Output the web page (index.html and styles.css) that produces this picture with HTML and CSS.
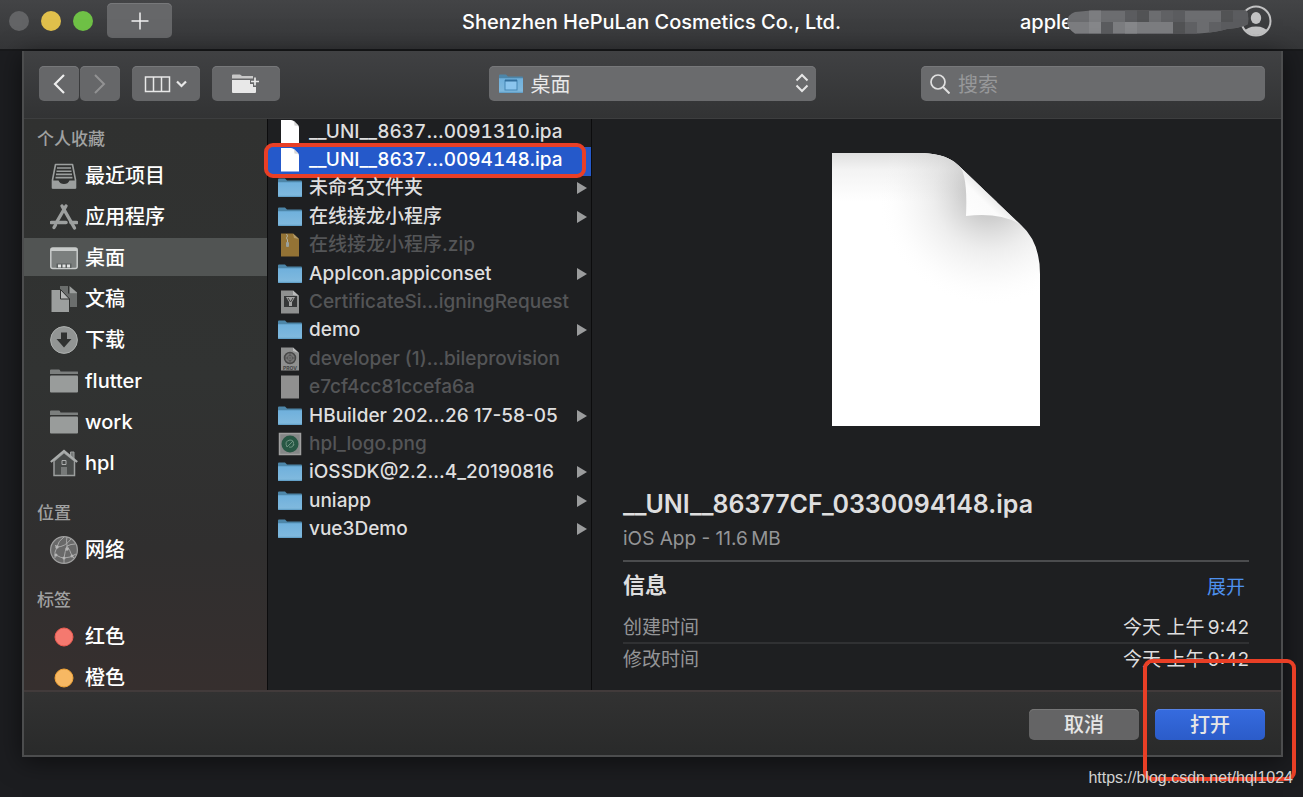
FILE: index.html
```html
<!DOCTYPE html>
<html lang="zh-CN">
<head>
<meta charset="utf-8">
<title>Shenzhen HePuLan Cosmetics Co., Ltd.</title>
<link rel="stylesheet" href="styles.css">
</head>
<body>
<svg class="defs" aria-hidden="true">
  <defs>
    <linearGradient id="blue" x1="0" y1="0" x2="0" y2="1"><stop offset="0" stop-color="#6fb0dc"/><stop offset="1" stop-color="#82bade"/></linearGradient>
    <symbol id="folder" viewBox="0 0 24 20"><path d="M0 1.500Q0 .5 1 .5H7L9 2.500H23Q24 2.500 24 3.500V5H0Z" fill="#4d86a9"/><path d="M0 4.200H24V18Q24 19 23 19H1Q0 19 0 18Z" fill="url(#blue)"/><path d="M0 18.300H24" stroke="#5d9cc3"/></symbol>
    <symbol id="doc" viewBox="0 0 24 24"><path d="M3 0H13Q15 0 16.500 1.500L20 5Q21 6 21 8V23.500H3Z" fill="#fff"/><path d="M15.500 1Q16.500 2 16.500 5.500Q19.500 5.500 20.500 6Z" fill="#d4d4d4"/></symbol>
    <symbol id="side-folder" viewBox="0 0 28 28"><path d="M0 3.500Q0 2.500 1 2.500H9Q10 2.500 10.500 4.500H27.500Q28.500 4.500 28 7H0Z" fill="#7c7f7e"/><rect y="8.500" width="28" height="17" rx="1" fill="#999c9b"/></symbol>
    <symbol id="arrow" viewBox="0 0 10 12"><path d="M0 0L10 6L0 12Z" fill="#9b9c9d"/></symbol>
  </defs>
</svg>

<header class="titlebar">
  <div class="window-controls">
    <span class="light"></span>
    <span class="light light-yellow"></span>
    <span class="light light-green"></span>
    <button class="button add" aria-label="添加"><svg width="18" height="18" viewBox="0 0 18 18"><path d="M9 .5V17.500M.5 9H17.500" stroke="#f2f2f2" stroke-width="1.500"/></svg></button>
  </div>
  <h1 class="window-title">Shenzhen HePuLan Cosmetics Co., Ltd.</h1>
  <div class="account">
    <span class="account-name">apple</span>
    <svg class="avatar" viewBox="0 0 32 32"><defs><clipPath id="face"><circle cx="16" cy="16" r="14"/></clipPath></defs><circle cx="16" cy="16" r="14.500" fill="none" stroke="#c2c2c3" stroke-width="2"/><g clip-path="url(#face)" fill="#c2c2c3"><ellipse cx="16" cy="13" rx="5.200" ry="6"/><path d="M4 27Q7 21.500 16 21.500T28 27V32H4Z"/></g></svg>
    <svg class="redaction" viewBox="0 0 182 25"><defs><clipPath id="smear"><path d="M0 12Q1 4 8 2L24 .5H179Q182 3 181 14L177 16Q168 19 160 19Q150 22 132 23.500H8Q2 20 0 12Z"/></clipPath></defs>
      <g clip-path="url(#smear)">
        <path fill="#6c6d70" d="M0 0H182V25H0Z"/>
        <path fill="#7c7d80" d="M22 0H34V12H22ZM0 12H22V25H0ZM46 12H106V25H46Z"/>
        <path fill="#86878a" d="M22 12H34V25H22ZM58 12H70V25H58Z"/>
        <path fill="#5b5c5f" d="M34 12H46V25H34ZM58 0H70V12H58ZM106 0H118V12H106ZM154 0H182V25H154Z"/>
        <path fill="#525355" d="M70 0H82V12H70ZM106 12H118V25H106ZM154 0H166V12H154Z"/>
        <path fill="#606164" d="M94 0H106V12H94ZM118 12H130V25H118ZM142 12H154V25H142Z"/>
      </g></svg>
  </div>
</header>

<main class="dialog">
  <div class="toolbar">
    <div class="tools">
      <div class="history">
        <button class="button nav-button" aria-label="后退"><svg width="12" height="20" viewBox="0 0 12 20"><path d="M11 1L2 10L11 19" fill="none" stroke="#eee" stroke-width="2.200"/></svg></button>
        <button class="button nav-button" aria-label="前进" disabled><svg width="12" height="20" viewBox="0 0 12 20"><path d="M1 1L10 10L1 19" fill="none" stroke="#929293" stroke-width="2"/></svg></button>
      </div>
      <button class="button tool-button" aria-label="分栏显示"><svg width="44" height="18" viewBox="0 0 44 18"><path d="M1.500 2H25.500V16.500H1.500ZM9.500 2V16.500M17.500 2V16.500" fill="none" stroke="#e8e8e8" stroke-width="1.500"/><path d="M33 6.500L37.500 11L42 6.500" fill="none" stroke="#e8e8e8" stroke-width="2.200"/></svg></button>
      <button class="button tool-button" aria-label="新建文件夹"><svg width="28" height="20" viewBox="0 0 28 20"><path d="M0 1.500Q0 .5 1 .5H8L10 2H21V4.500H0Z" fill="#c8c8c8"/><path d="M0 6H18V10H21V13H24V18Q24 19 23 19H1Q0 19 0 18Z" fill="#e8e8e8"/><path d="M23 3.500V11.500M19 7.500H27" stroke="#e8e8e8" stroke-width="1.700"/></svg></button>
    </div>
    <label class="location">
      <svg class="location-icon" viewBox="0 0 24 20"><use href="#folder"/><rect x="6" y="6.500" width="12" height="9.500" fill="#8bc5ee" stroke="#4586b4"/><path d="M6 6.500H18" stroke="#326f9d" stroke-width="2"/></svg>
      <select class="location-select" aria-label="位置"><option>桌面</option></select>
      <svg class="location-steps" viewBox="0 0 14 20"><path d="M1.500 7.500L7 2L12.500 7.500M1.500 12.500L7 18L12.500 12.500" fill="none" stroke="#e6e6e6" stroke-width="2"/></svg>
    </label>
    <label class="search">
      <svg class="search-icon" viewBox="0 0 20 20"><circle cx="8" cy="8" r="7" fill="none" stroke="#e0e0e0" stroke-width="1.700"/><path d="M13 13L19.500 19.500" stroke="#e0e0e0" stroke-width="2"/></svg>
      <input class="search-input" type="search" placeholder="搜索" aria-label="搜索">
    </label>
  </div>

  <div class="browser">
    <nav class="sidebar">
      <section class="group">
        <h2 class="group-title">个人收藏</h2>
        <a class="place" href="#"><svg class="place-icon" viewBox="0 0 28 28"><path d="M5.500 2.500H22.500L25.500 18V26H2.500V18Z" fill="none" stroke="#9c9f9e" stroke-width="1.600" stroke-linejoin="round"/><path d="M7 6H21M6.500 9.200H21.500M6 12.400H22M5.500 15.600H22.500" stroke="#9c9f9e" stroke-width="1.600"/><path d="M2 18.500H8.500Q10 22 14 22T19.500 18.500H26V25Q26 26.500 24.500 26.500H3.500Q2 26.500 2 25Z" fill="#9c9f9e"/></svg>最近项目</a>
        <a class="place" href="#"><svg class="place-icon" viewBox="0 0 28 28"><path d="M1.500 19.500H16M21 19.500H26.500" stroke="#9c9f9e" stroke-width="3.600" stroke-linecap="round"/><path d="M12 3L24.500 25M16 3L7 18.500M5.500 22L4 24.500" stroke="#9c9f9e" stroke-width="3.400" stroke-linecap="round"/></svg>应用程序</a>
        <a class="place place-current" href="#" aria-current="page"><svg class="place-icon" viewBox="0 0 28 28"><rect x=".8" y="4" width="26.400" height="20.500" rx="2" fill="#7b7f7e" stroke="#c8cbca" stroke-width="1.500"/><path d="M1 5.500H27" stroke="#c8cbca" stroke-width="3"/><path d="M6.500 19.500H21.500V24H6.500Z" fill="#5c6160"/><path d="M8 20.500H11V23.500H8ZM12.500 20.500H15.500V23.500H12.500ZM17 20.500H20V23.500H17Z" fill="#e2e4e3"/></svg>桌面</a>
        <a class="place" href="#"><svg class="place-icon" viewBox="0 0 28 28"><path d="M10 1H18V8.500H27V22H10Z" fill="#6b6e6d"/><path d="M19.500 1L27 7.500V8.500H19.500Z" fill="#9c9f9e"/><path d="M1 4.500H10.500L19.500 14V27.500H1Z" fill="#9c9f9e" stroke="#303231"/><path d="M10.500 4.500L19.500 14H10.500Z" fill="#b7b9b8" stroke="#303231"/></svg>文稿</a>
        <a class="place" href="#"><svg class="place-icon" viewBox="0 0 28 28"><circle cx="14" cy="14" r="13.400" fill="#929594" stroke="#adb0af"/><path d="M11 6.500H17V13H21.500L14 21.500L6.500 13H11Z" fill="#303231"/></svg>下载</a>
        <a class="place" href="#"><svg class="place-icon"><use href="#side-folder"/></svg>flutter</a>
        <a class="place" href="#"><svg class="place-icon"><use href="#side-folder"/></svg>work</a>
        <a class="place" href="#"><svg class="place-icon" viewBox="0 0 28 28"><path d="M4 12V26.500H24.500V12L14 3.500Z" fill="#484b4a" stroke="#9c9f9e" stroke-width="1.500"/><path d="M20.500 8V3H24V11" fill="#777a79" stroke="#9c9f9e"/><path d="M.8 13L14 2L27.200 13" fill="none" stroke="#aaadac" stroke-width="2.200"/><path d="M12 11.500H16V15.500H12Z" fill="none" stroke="#aaadac"/><path d="M11 18H17V26H11Z" fill="#777a79"/></svg>hpl</a>
      </section>
      <section class="group">
        <h2 class="group-title">位置</h2>
        <a class="place" href="#"><svg class="place-icon" viewBox="0 0 28 28"><circle cx="14" cy="14" r="13.400" fill="#696969" stroke="#a0a0a0" stroke-width="1.200"/><path d="M7 11Q15 11 21 3M7 11Q4 16 5 22M7 11Q8 5 14 1M5 9L7 11M6 19Q11 22 14 22Q20 22 26 18M17 10Q16 4 17 1M17 10Q15 15 14 22V27M17 10Q20 14 22 20L24 22M17 10Q21 8 25 8" fill="none" stroke="#a9a9a9"/><g fill="#b5b5b5"><circle cx="7" cy="11" r="1.700"/><circle cx="17" cy="13" r="1.700"/><circle cx="14" cy="22" r="1.500"/><circle cx="22" cy="20" r="1.500"/><circle cx="6" cy="19" r="1.500"/></g></svg>网络</a>
      </section>
      <section class="group">
        <h2 class="group-title">标签</h2>
        <a class="place" href="#"><svg class="place-icon" viewBox="0 0 28 28"><circle cx="14" cy="14" r="9" fill="#f4796f" stroke="#ee5c52"/></svg>红色</a>
        <a class="place" href="#"><svg class="place-icon" viewBox="0 0 28 28"><circle cx="14" cy="14" r="9" fill="#f7b863" stroke="#f1a336"/></svg>橙色</a>
      </section>
    </nav>

    <div class="files-column">
      <div class="files">
        <button class="file file-build"><svg class="file-icon"><use href="#doc"/></svg><span class="file-name">__UNI__8637…0091310.ipa</span></button>
        <button class="file file-build file-selected"><svg class="file-icon"><use href="#doc"/></svg><span class="file-name">__UNI__8637…0094148.ipa</span></button>
        <button class="file"><svg class="file-icon"><use href="#folder"/></svg><span class="file-name">未命名文件夹</span><svg class="file-arrow"><use href="#arrow"/></svg></button>
        <button class="file"><svg class="file-icon"><use href="#folder"/></svg><span class="file-name">在线接龙小程序</span><svg class="file-arrow"><use href="#arrow"/></svg></button>
        <button class="file" disabled><svg class="file-icon" viewBox="0 0 24 24"><path d="M3 .5H15L21 6V23.500H3Z" fill="#947335"/><path d="M15 .5L16 5L21 6Z" fill="#b39a68"/><path d="M8.500 1L9.500 3L8.500 5L9.500 7V9" stroke="#b5b3a8" fill="none"/><rect x="8" y="9" width="3" height="5" rx="1" fill="#9aa09b"/></svg><span class="file-name">在线接龙小程序.zip</span></button>
        <button class="file"><svg class="file-icon"><use href="#folder"/></svg><span class="file-name">AppIcon.appiconset</span><svg class="file-arrow"><use href="#arrow"/></svg></button>
        <button class="file" disabled><svg class="file-icon" viewBox="0 0 24 24"><path d="M3 .5H15L21 6V23.500H3Z" fill="#8f9090"/><path d="M15 .5V5L21 6Z" fill="#bbb"/><path d="M6 6H19V17H6Z" fill="#363738"/><path d="M8 7H17L14 12V16H11V12Z" fill="#a2a2a2"/><path d="M10 8L12.500 12L15 8" fill="none" stroke="#444"/></svg><span class="file-name">CertificateSi…igningRequest</span></button>
        <button class="file"><svg class="file-icon"><use href="#folder"/></svg><span class="file-name">demo</span><svg class="file-arrow"><use href="#arrow"/></svg></button>
        <button class="file" disabled><svg class="file-icon" viewBox="0 0 24 24"><path d="M3 .5H15L21 6V23.500H3Z" fill="#8f9090"/><path d="M15 .5V4L21 6Z" fill="#bbb"/><circle cx="12" cy="11" r="5.500" fill="#777" stroke="#484848" stroke-width="1.500"/><circle cx="12" cy="11" r="2.500" fill="#999" stroke="#555"/><path d="M7 11H17M12 6V16" stroke="#555"/><text class="prov" x="12" y="22.500">PROV</text></svg><span class="file-name">developer (1)…bileprovision</span></button>
        <button class="file" disabled><svg class="file-icon" viewBox="0 0 24 24"><path d="M3 .5H21V23.500H3Z" fill="#909090"/></svg><span class="file-name">e7cf4cc81ccefa6a</span></button>
        <button class="file"><svg class="file-icon"><use href="#folder"/></svg><span class="file-name">HBuilder 202…26 17-58-05</span><svg class="file-arrow"><use href="#arrow"/></svg></button>
        <button class="file" disabled><svg class="file-icon" viewBox="0 0 24 24"><path d="M1.500 1.500H22.500V22.500H1.500Z" fill="#858787" stroke="#a0a0a0" stroke-width="1.500"/><circle cx="12" cy="12" r="8.500" fill="#275744"/><path d="M9 15Q6 9 12 8Q17 8 15 14M9 15L15 9M11 15Q15 16 16 12" fill="none" stroke="#6e9281"/></svg><span class="file-name">hpl_logo.png</span></button>
        <button class="file"><svg class="file-icon"><use href="#folder"/></svg><span class="file-name">iOSSDK@2.2…4_20190816</span><svg class="file-arrow"><use href="#arrow"/></svg></button>
        <button class="file"><svg class="file-icon"><use href="#folder"/></svg><span class="file-name">uniapp</span><svg class="file-arrow"><use href="#arrow"/></svg></button>
        <button class="file"><svg class="file-icon"><use href="#folder"/></svg><span class="file-name">vue3Demo</span><svg class="file-arrow"><use href="#arrow"/></svg></button>
      </div>
    </div>

    <section class="preview">
      <svg class="preview-art" viewBox="0 0 210 275">
        <defs>
          <clipPath id="page"><path d="M1 1H92Q116 2 127 13L190 73Q209 90 209 122V274H1Z"/></clipPath>
          <linearGradient id="top" x1="0" y1="0" x2="0" y2="1"><stop offset="0" stop-color="#dedede"/><stop offset=".35" stop-color="#f3f3f3"/><stop offset="1" stop-color="#fff"/></linearGradient>
          <radialGradient id="fold-shade" gradientUnits="userSpaceOnUse" cx="158" cy="42" r="112"><stop offset="0" stop-color="#808080" stop-opacity=".6"/><stop offset=".25" stop-color="#909090" stop-opacity=".4"/><stop offset=".5" stop-color="#b0b0b0" stop-opacity=".22"/><stop offset=".75" stop-color="#ccc" stop-opacity=".1"/><stop offset="1" stop-color="#fff" stop-opacity="0"/></radialGradient>
          <linearGradient id="flap" x1="0" y1="1" x2="1" y2="0"><stop offset="0" stop-color="#fff"/><stop offset=".4" stop-color="#fbfbfb"/><stop offset=".6" stop-color="#dedede"/></linearGradient>
        </defs>
        <g clip-path="url(#page)">
          <path d="M0 0H210V275H0Z" fill="#fff"/>
          <path d="M0 0H210V50H0Z" fill="url(#top)"/>
          <path d="M0 0H210V275H0Z" fill="url(#fold-shade)"/>
          <path d="M127 13Q137 20 135 64Q170 60 190 73Z" fill="url(#flap)"/>
        </g>
      </svg>
      <h2 class="preview-title">__UNI__86377CF_0330094148.ipa</h2>
      <p class="preview-kind">iOS App - 11.6&#8201;MB</p>
      <div class="info-head"><h3 class="info-title">信息</h3><a class="expand" href="#">展开</a></div>
      <dl class="info">
        <div class="info-row"><dt>创建时间</dt><dd>今天 上午&#8201;9:42</dd></div>
        <div class="info-row"><dt>修改时间</dt><dd>今天 上午&#8201;9:42</dd></div>
      </dl>
    </section>
  </div>

  <footer class="actions">
    <button class="action">取消</button>
    <button class="action action-primary">打开</button>
  </footer>
</main>
<p class="watermark">https://blog.csdn.net/hql1024</p>
</body>
</html>
```

FILE: styles.css
```css
* { box-sizing: border-box; }

body {
  margin: 0;
  height: 100vh;
  display: flex;
  flex-direction: column;
  overflow: hidden;
  background: #1c1d20;
  color: #fff;
  font-family: Inter, "Noto Sans CJK SC", sans-serif;
  font-size: 19px;
}

h1, h2, h3, p, dl, dd { margin: 0; }
a { color: inherit; text-decoration: none; }
button, input, select { font: inherit; color: inherit; border: 0; }
svg { display: block; flex: none; }
.defs { position: absolute; width: 0; height: 0; }

.titlebar {
  flex: none;
  display: grid;
  grid-template-columns: 1fr auto 1fr;
  height: 51px;
  background: linear-gradient(#434446, #353638);
  border-bottom: 2px solid #18191b;
}

.window-controls { display: flex; align-items: center; gap: 12px; height: 41px; padding-left: 9px; }
.light { width: 20px; height: 20px; border-radius: 50%; background: #636466; }
.light-yellow { background: #e1c04c; }
.light-green { background: #6fc146; }

.button {
  display: flex;
  align-items: center;
  justify-content: center;
  height: 35px;
  padding: 0;
  border-radius: 5px;
  background: #666769;
  box-shadow: inset 0 1px #77787a;
}
.add { width: 65px; margin-left: 2px; }

.window-title { font-size: 20px; font-weight: 500; line-height: 45px; }

.account { position: relative; display: flex; justify-content: space-between; align-items: center; justify-self: end; width: 252px; height: 41px; margin-right: 31px; }
.account-name { font-size: 20px; font-weight: 500; line-height: 24px; padding-top: 3px; }
.avatar { width: 32px; height: 32px; }
.redaction { position: absolute; left: 47px; top: 10px; width: 182px; height: 25px; }

.dialog {
  position: relative;
  flex: 1;
  min-height: 0;
  display: flex;
  flex-direction: column;
  margin: 0 20px 40px 22px;
  border: solid #4c4d4e;
  border-width: 0 2px 2px;
  box-shadow: 0 4px 24px #0008;
}

.toolbar {
  flex: none;
  display: flex;
  justify-content: space-between;
  align-items: center;
  height: 68px;
  padding: 0 16px 2px 15px;
  background: linear-gradient(#404143, #323334);
  border-bottom: 1px solid #3d3e3f;
}
.tools { display: flex; gap: 12px; width: 344px; }
.history { display: flex; gap: 1px; }
.nav-button { width: 40px; }
.tool-button { width: 68px; }

.location { position: relative; width: 327px; }
.location-icon { position: absolute; left: 10px; top: 8px; width: 24px; height: 20px; }
.location-steps { position: absolute; right: 7px; top: 7px; width: 14px; height: 20px; }
.location-select {
  appearance: none;
  display: block;
  width: 100%;
  height: 35px;
  padding: 2px 28px 0 42px;
  border-radius: 5px;
  background: #6a6b6d;
  box-shadow: inset 0 1px #77787a;
  color: #e8e8e8;
  font-size: 20px;
}

.search { position: relative; width: 344px; }
.search-icon { position: absolute; left: 9px; top: 8px; width: 20px; height: 20px; }
.search-input {
  appearance: none;
  display: block;
  width: 100%;
  height: 35px;
  padding: 2px 10px 0 37px;
  border-radius: 5px;
  background: #6a6b6d;
  box-shadow: inset 0 1px #77787a;
  font-size: 20px;
}
.search-input::placeholder { color: #97989a; opacity: 1; }

.browser { flex: 1; min-height: 0; display: flex; overflow: hidden; background: #1e1f21; }

.sidebar {
  flex: none;
  width: 243px;
  padding-top: 7px;
  overflow: hidden;
  background: linear-gradient(#303130, #313332 45%, #302f2f 75%, #362f2e);
}
.group { display: flex; flex-direction: column; gap: 3px; margin-bottom: 19px; }
.group-title { padding-left: 13px; margin-bottom: 1px; color: #a0a1a1; font-size: 17px; font-weight: 500; line-height: 26px; }
.place { display: flex; align-items: center; gap: 7px; height: 38px; padding: 2px 0 0 26px; font-size: 20px; font-weight: 500; line-height: 36px; }
.place-current { background: #515453; }
.place-icon { width: 28px; height: 28px; }

.files-column { flex: none; width: 324px; border-left: 1px solid #0c0c0d; }
.files {
  display: grid;
  grid-template-columns: minmax(0, 1fr);
  grid-auto-rows: 1fr;
  min-height: 426px;
}
.file {
  position: relative;
  display: flex;
  align-items: center;
  gap: 7px;
  padding: 0 4px 3px 10px;
  background: none;
  color: #dededf;
  font-weight: 500;
  line-height: 24px;
  text-align: left;
}
.file:disabled { color: #545557; }
.file-build { font-variant-numeric: tabular-nums; }
.file-name { flex: 1; white-space: nowrap; }
.file-icon { width: 24px; height: 24px; }
.file-arrow { width: 10px; height: 12px; }
.file-selected { background: #2559ca; color: #fff; }
.file-selected::after {
  content: "";
  position: absolute;
  left: -4px;
  right: 5px;
  top: -4px;
  bottom: -2px;
  border: 4px solid #e93f26;
  border-radius: 9px;
}
.prov { font-family: Inter, sans-serif; font-size: 5px; font-weight: 700; fill: #444; text-anchor: middle; }

.preview {
  flex: 1;
  display: flex;
  flex-direction: column;
  padding: 33px 32px 0 31px;
  border-left: 1px solid #0c0c0d;
}
.preview-art { align-self: center; width: 210px; height: 275px; }
.preview-title { margin-top: 60px; color: #dededf; font-size: 25px; font-weight: 600; line-height: 34px; }
.preview-kind { padding: 2px 0 6px; border-bottom: 2px solid #4b4c4e; color: #949597; line-height: 31px; }
.info-head { display: flex; justify-content: space-between; align-items: center; height: 50px; padding: 0 4px 4px 0; }
.info-title { color: #dededf; font-size: 22px; font-weight: 700; line-height: 30px; }
.expand { color: #4e91ee; }
.info-row { display: flex; justify-content: space-between; height: 32px; line-height: 32px; border-bottom: 2px solid #303133; }
.info-row:last-child { border-bottom: 0; }
.info-row dt { color: #949597; }
.info-row dd { color: #dededf; }

.actions {
  flex: none;
  display: flex;
  justify-content: flex-end;
  gap: 16px;
  height: 65px;
  padding: 17px 16px 0;
  background: linear-gradient(#323232, #292a2a);
  border-top: 2px solid #423b3b;
}
.action { position: relative; width: 110px; height: 31px; padding: 2px 0 0; border-radius: 5px; background: #646465; box-shadow: inset 0 1px #777; color: #e6e6e6; font-size: 20px; font-weight: 500; line-height: 29px; }
.action-primary { background: linear-gradient(#366bdf, #2b5cc9); box-shadow: inset 0 1px #5682e5; }
.action-primary::after {
  content: "";
  position: absolute;
  inset: -50px -31px -41px -12px;
  border: 4px solid #e93f26;
  border-radius: 9px;
}

.watermark { position: absolute; right: 10px; bottom: 9px; color: #d2d2d2; font-family: "Liberation Sans", sans-serif; font-size: 16px; line-height: 20px; }
```
